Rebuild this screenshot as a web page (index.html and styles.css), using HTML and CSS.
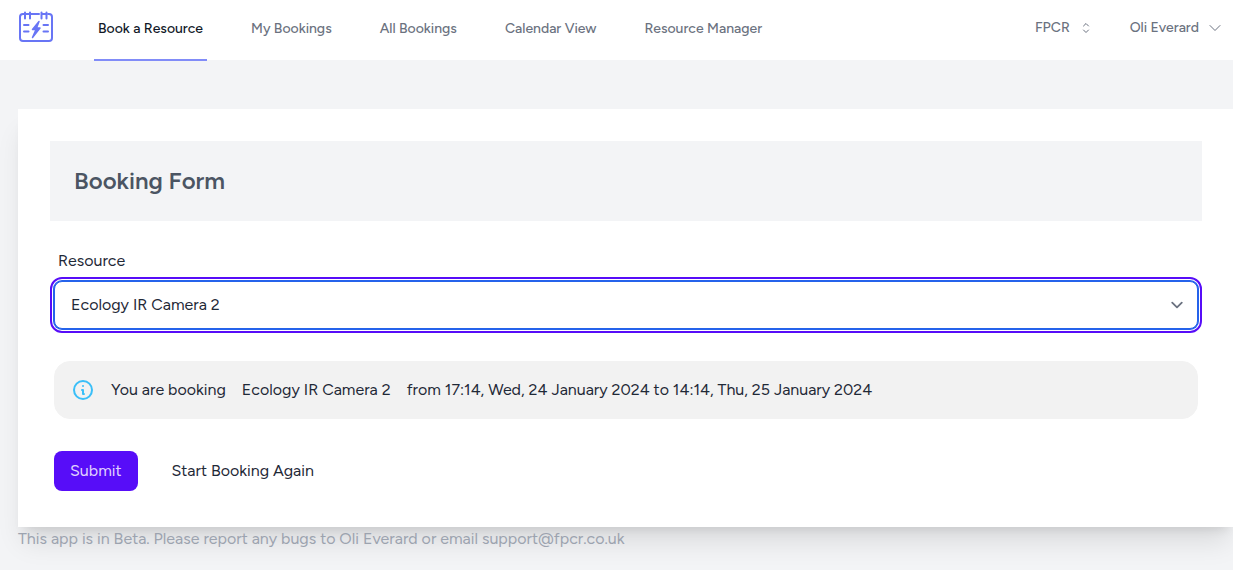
FILE: index.html
```html
<!DOCTYPE html>
<html lang="en">
<head>
    <meta charset="UTF-8">
    <meta name="viewport" content="width=device-width, initial-scale=1.0">
    <title>Book a Resource</title>
    <link rel="stylesheet" href="styles.css">
</head>
<body>
    <header class="navbar">
        <a href="#" class="logo" aria-label="Home">
            <svg width="36" height="36" viewBox="0 0 36 36" fill="none" stroke="currentColor" stroke-width="2" stroke-linecap="round" stroke-linejoin="round">
                <path d="M14.500 5H21M30 5H31Q34 5 34 8V29Q34 32 31 32H5Q2 32 2 29V8Q2 5 5 5H21" />
                <path d="M7 3.500v6M12 3.500v6M23.500 3.500v6M28.500 3.500v6M23.500 5h5"/>
                <path d="M6 16h4.500M6 22.500h4.500M25.500 16h4.500M25.500 22.500h4.500"/>
                <path d="M21 12.500L14.500 20.500H18L14.500 28.500L22 19H18.500Z" fill="currentColor" stroke-width="1.5"/>
            </svg>
        </a>
        <nav class="nav-links">
            <a href="#" class="nav-link active">Book a Resource</a>
            <a href="#" class="nav-link">My Bookings</a>
            <a href="#" class="nav-link">All Bookings</a>
            <a href="#" class="nav-link">Calendar View</a>
            <a href="#" class="nav-link">Resource Manager</a>
        </nav>
        <div class="nav-menus">
            <button type="button" class="menu-button">
                FPCR
                <svg width="16" height="16" viewBox="0 0 24 24" fill="none" stroke="currentColor" stroke-width="1.5" stroke-linecap="round" stroke-linejoin="round">
                    <path d="M8.250 15L12 18.750L15.750 15M8.250 9L12 5.250L15.750 9"/>
                </svg>
            </button>
            <button type="button" class="menu-button">
                Oli Everard
                <svg width="16" height="16" viewBox="0 0 24 24" fill="none" stroke="currentColor" stroke-width="1.5" stroke-linecap="round" stroke-linejoin="round">
                    <path d="M19.500 8.250L12 15.750L4.500 8.250"/>
                </svg>
            </button>
        </div>
    </header>

    <main class="page">
        <section class="card">
            <h1 class="card-title">Booking Form</h1>
            <form class="booking-form">
                <label for="resource" class="form-label">Resource</label>
                <select id="resource" class="form-select">
                    <option>Ecology IR Camera 2</option>
                </select>
                <div class="alert">
                    <svg width="24" height="24" viewBox="0 0 24 24" fill="none" stroke="currentColor" stroke-width="2" stroke-linecap="round" stroke-linejoin="round">
                        <path d="M13 16h-1v-4h-1m1-4h.01M21 12a9 9 0 11-18 0 9 9 0 0118 0z"/>
                    </svg>
                    <span>You are booking</span>
                    <span>Ecology IR Camera 2</span>
                    <span>from 17:14, Wed, 24 January 2024 to 14:14, Thu, 25 January 2024</span>
                </div>
                <div class="actions">
                    <button type="submit" class="btn-submit">Submit</button>
                    <a href="#" class="restart-link">Start Booking Again</a>
                </div>
            </form>
        </section>
        <footer class="beta-note">This app is in Beta. Please report any bugs to Oli Everard or email support@fpcr.co.uk</footer>
    </main>
</body>
</html>
```

FILE: styles.css
```css
* {
    box-sizing: border-box;
}
body {
    margin: 0;
    min-height: 100vh;
    font-family: Figtree, Lato, sans-serif;
    font-size: 16px;
    line-height: 24px;
    color: #1f2937;
    background-color: #f3f4f6;
}
a {
    color: inherit;
    text-decoration: none;
}
button, select {
    font: inherit;
    color: inherit;
}
.navbar {
    display: flex;
    height: 61px;
    padding: 0 10px 0 18px;
    background-color: #fff;
    border-bottom: 1px solid #f3f4f6;
}
.logo {
    display: flex;
    margin-top: 9px;
    color: #6875f5;
}
.nav-links {
    display: flex;
    gap: 40px;
    margin: 0 auto -1px 40px;
}
.nav-link {
    display: flex;
    align-items: center;
    padding: 0 4px 2px;
    border-bottom: 2px solid transparent;
    font-size: 14px;
    font-weight: 500;
    line-height: 20px;
    color: #6b7280;
    white-space: nowrap;
}
.nav-link.active {
    color: #111827;
    border-bottom-color: #818cf8;
}
.nav-menus {
    display: flex;
    align-items: center;
    gap: 36px;
    padding-bottom: 4px;
}
.menu-button {
    display: flex;
    align-items: center;
    gap: 8px;
    padding: 0;
    background: none;
    border: none;
    font-size: 14px;
    font-weight: 500;
    color: #6b7280;
    white-space: nowrap;
    cursor: pointer;
}
.page {
    padding: 48px 0 0 18px;
    overflow-x: clip;
}
.card {
    padding: 32px;
    margin-right: -1px;
    background-color: #fff;
    box-shadow: 0 20px 25px -5px rgba(0, 0, 0, 0.1), 0 8px 10px -6px rgba(0, 0, 0, 0.1);
}
.card-title {
    margin: 0;
    padding: 24px;
    font-size: 24px;
    line-height: 32px;
    font-weight: 600;
    color: #4b5563;
    background-color: #f3f4f6;
}
.booking-form {
    padding: 20px 4px 4px;
}
.form-label {
    display: block;
    padding: 8px 4px;
}
.form-select {
    display: block;
    width: 100%;
    height: 48px;
    padding: 0 40px 0 16px;
    appearance: none;
    border: 1px solid #2563eb;
    border-radius: 8px;
    box-shadow: 0 0 0 1px #2563eb;
    outline: 2px solid #570df8;
    outline-offset: 2px;
    background: #fff url("data:image/svg+xml,%3Csvg xmlns='http://www.w3.org/2000/svg' fill='none' viewBox='0 0 20 20'%3E%3Cpath stroke='%236b7280' stroke-linecap='round' stroke-linejoin='round' stroke-width='1.5' d='M6 8l4 4 4-4'/%3E%3C/svg%3E") no-repeat right 8px center / 24px 24px;
}
.alert {
    display: flex;
    align-items: center;
    gap: 16px;
    margin: 32px 0;
    padding: 16px;
    border: 1px solid #f2f2f2;
    border-radius: 16px;
    background-color: #f2f2f2;
}
.alert svg {
    flex-shrink: 0;
    color: #3abff8;
}
.actions {
    display: flex;
    align-items: center;
    gap: 34px;
}
.btn-submit {
    height: 40px;
    padding: 0 16px;
    border: none;
    border-radius: 8px;
    color: #e0d2fe;
    background-color: #570df8;
    cursor: pointer;
}
.beta-note {
    color: #9ca3af;
    position: relative;
}
```
